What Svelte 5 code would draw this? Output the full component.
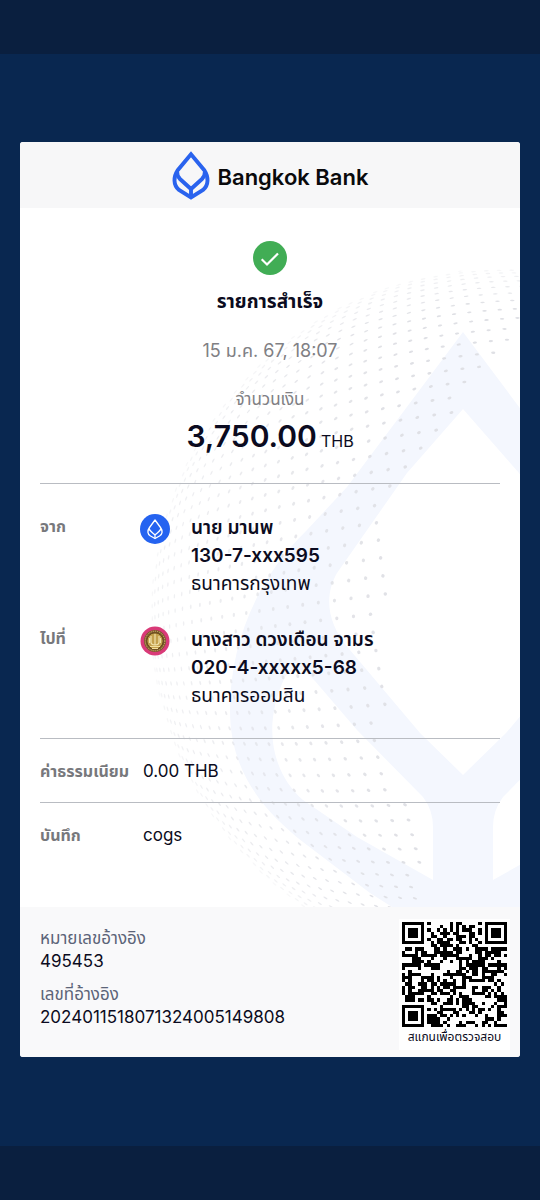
<script lang="ts">
	type Party = {
		label: string;
		name: string;
		account: string;
		bank: string;
		icon: 'bbl' | 'gsb';
	};

	const parties: Party[] = [
		{ label: 'จาก', name: 'นาย มานพ', account: '130-7-xxx595', bank: 'ธนาคารกรุงเทพ', icon: 'bbl' },
		{
			label: 'ไปที่',
			name: 'นางสาว ดวงเดือน จามร',
			account: '020-4-xxxxx5-68',
			bank: 'ธนาคารออมสิน',
			icon: 'gsb'
		}
	];

	const details = [
		{ label: 'ค่าธรรมเนียม', value: '0.00 THB' },
		{ label: 'บันทึก', value: 'cogs' }
	];

	const references = [
		{ label: 'หมายเลขอ้างอิง', value: '495453' },
		{ label: 'เลขที่อ้างอิง', value: '2024011518071324005149808' }
	];

	// the dots only cover the rim of the globe, the middle stays clear
	function isClear(x: number, y: number) {
		if (y < 285) return x * 0.787 + y * 0.618 > 467;
		return x > 366 + Math.max(0, y - 520) * 0.25;
	}

	// dotted globe behind the slip body
	function globeDots() {
		const dots = [];
		const radius = 350;
		const step = 0.053;
		for (let i = -30; i <= 10; i++) {
			for (let j = -30; j <= 30; j++) {
				const u = i * step + j * 0.008;
				const v = j * step - i * 0.006;
				const rho = Math.hypot(u, v);
				if (rho > 1.5) continue;
				const x = 480 + (radius * Math.sin(rho) * u) / (rho || 1);
				const y = 410 + (radius * Math.sin(rho) * v) / (rho || 1);
				if (isClear(x, y)) continue;
				dots.push({
					x,
					y,
					rx: Math.max(0.7, 1.8 * Math.cos(rho)),
					ry: 1.6 + rho * 0.6,
					angle: (Math.atan2(v, u) * 180) / Math.PI,
					opacity: Math.min(1, (1.6 - rho) * 2, 0.15 + x / 450)
				});
			}
		}
		return dots;
	}

	const dots = globeDots();

	const qrSize = 33;

	function inFinder(x: number, y: number) {
		return (x < 8 && y < 8) || (x > 24 && y < 8) || (x < 8 && y > 24);
	}

	function qrPath() {
		let d = '';
		let seed = 495453;
		for (let y = 0; y < qrSize; y++) {
			for (let x = 0; x < qrSize; x++) {
				seed = (seed * 1103515245 + 12345) % 2147483648;
				if (!inFinder(x, y) && seed / 2147483648 > 0.48) d += `M${x} ${y}h1v1h-1z`;
			}
		}
		return d;
	}

	const finders = [
		[0, 0],
		[26, 0],
		[0, 26]
	];

	const lotus =
		'M0 0L-116 155L-156 198C-205 245-233 310-233 378C-233 440-200 478-160 510L-93 561L0 620L93 561L160 510C200 478 233 440 233 378C233 310 205 245 156 198L116 155ZM0 77L56 141L126 241C138 262 138 290 113 318L43 401L0 443L-43 401L-113 318C-138 290-138 262-126 241L-56 141ZM-178 345Q-166 328-148 349L-106 398L-40 465Q-30 478-30 495V548L-106 505L-160 468C-190 442-202 395-178 345ZM178 345C202 395 190 442 160 468L106 505L30 548V495Q30 478 40 465L106 398L148 349Q166 328 178 345Z';
</script>

<div class="screen">
	<main>
		<article class="slip">
			<header>
				<svg class="logo" viewBox="0 0 38 49" aria-hidden="true">
					<g fill="none" stroke="#2a63ee" stroke-width="3.900">
						<path d="M19 3.200L5.500 19.500C1.500 25.500 1 34 7 39L19 46.500L31 39C37 34 36.500 25.500 32.500 19.500Z" />
						<path d="M5 20C5 24 6 26 8 28L19 38L30 28C32 26 33 24 33 20M19 37V46" />
					</g>
				</svg>
				<span class="brand">Bangkok Bank</span>
			</header>

			<div class="body">
				<svg class="watermark" viewBox="0 0 500 700" preserveAspectRatio="xMaxYMin slice" aria-hidden="true">
					<path d={lotus} transform="translate(443 124)" fill="#f4f7fe" fill-rule="evenodd" />
					{#each dots as dot}
						<ellipse
							rx={dot.rx}
							ry={dot.ry}
							fill="#dfe0e5"
							opacity={dot.opacity}
							transform={`translate(${dot.x} ${dot.y}) rotate(${dot.angle})`}
						/>
					{/each}
				</svg>

				<section class="summary">
					<svg class="check" viewBox="0 0 34 34" aria-hidden="true">
						<circle cx="17" cy="17" r="17" fill="#41ad55" />
						<path d="M8.700 18.300L14 23.500L25 12.500" fill="none" stroke="#fff" stroke-width="2.200" />
					</svg>
					<h1>รายการสำเร็จ</h1>
					<time datetime="2024-01-15T18:07">15 ม.ค. 67, 18:07</time>
					<p class="amount-label">จำนวนเงิน</p>
					<p class="amount"><strong>3,750.00</strong> <span>THB</span></p>
				</section>

				<section class="parties">
					{#each parties as party}
						<div class="party">
							<span class="label">{party.label}</span>
							{#if party.icon === 'bbl'}
								<svg class="bank-icon" viewBox="0 0 30 30" aria-hidden="true">
									<circle cx="15" cy="15" r="15" fill="#2563f0" />
									<g fill="none" stroke="#fff" stroke-width="1.300" stroke-linejoin="round">
										<path d="M15 6L9.500 13.500C7 17 7.500 20 10.500 22L15 24.500L19.500 22C22.500 20 23 17 20.500 13.500Z" />
										<path d="M9 14.500C9.500 17 13 19 15 21C17 19 20.500 17 21 14.500M15 21V24.500" />
									</g>
								</svg>
							{:else}
								<svg class="bank-icon" viewBox="0 0 30 30" aria-hidden="true">
									<circle cx="15" cy="15" r="14.500" fill="#d93a78" />
									<circle cx="15" cy="15" r="11" fill="#7b5a2a" />
									<circle cx="15" cy="15" r="9.800" fill="none" stroke="#d8bd79" stroke-dasharray="1 1" />
									<circle cx="15" cy="15" r="8.200" fill="#c3a04c" stroke="#604319" />
									<path d="M11 10v6q0 3 4 3t4-3v-6M15 8v11M9.500 12v5M20.500 12v5" fill="none" stroke="#f0e2ac" stroke-width="1.200" />
									<path d="M10 20.500h10M12 22.500h6" stroke="#f2df9d" stroke-width="1" />
								</svg>
							{/if}
							<div class="who">
								<strong>{party.name}</strong>
								<strong>{party.account}</strong>
								<span>{party.bank}</span>
							</div>
						</div>
					{/each}
				</section>

				<dl class="details">
					{#each details as row}
						<div>
							<dt class="label">{row.label}</dt>
							<dd>{row.value}</dd>
						</div>
					{/each}
				</dl>
			</div>

			<footer>
				<dl class="references">
					{#each references as ref}
						<div>
							<dt>{ref.label}</dt>
							<dd>{ref.value}</dd>
						</div>
					{/each}
				</dl>
				<figure>
					<svg class="qr" viewBox="0 0 33 33" shape-rendering="crispEdges" aria-hidden="true">
						<path d={qrPath()} />
						{#each finders as [x, y]}
							<path
								d={`M${x} ${y}h7v7h-7zM${x + 1} ${y + 1}v5h5v-5zM${x + 2} ${y + 2}h3v3h-3z`}
								fill-rule="evenodd"
							/>
						{/each}
					</svg>
					<figcaption>สแกนเพื่อตรวจสอบ</figcaption>
				</figure>
			</footer>
		</article>
	</main>
</div>

<style>
	:global(body) {
		margin: 0;
		background: #092750;
	}

	.screen {
		display: flex;
		flex-direction: column;
		box-sizing: border-box;
		min-height: 100vh;
		border-block: 54px solid #0a1f3f;
		background: #092750;
		color: #0b0b20;
		font-family: Inter, 'Noto Sans Thai', 'Noto Sans', sans-serif;
		font-size: 17px;
		line-height: 28px;
	}

	main {
		padding: 88px 20px;
	}

	h1,
	p,
	dl,
	dd,
	figure {
		margin: 0;
	}

	.slip {
		overflow: hidden;
		border-radius: 3px;
		background: #fff;
	}

	header {
		display: flex;
		align-items: center;
		justify-content: center;
		gap: 8px;
		height: 66px;
		background: #f7f7f8;
	}

	.logo {
		width: 38px;
		height: 49px;
	}

	.brand {
		padding-top: 4px;
		color: #0a0a0c;
		font-size: 22px;
		font-weight: 600;
	}

	.body {
		position: relative;
		padding: 0 20px 41px;
	}

	.watermark {
		position: absolute;
		inset: 0;
		width: 100%;
		height: 100%;
	}

	.summary,
	.parties,
	.details {
		position: relative;
	}

	.summary {
		display: flex;
		flex-direction: column;
		align-items: center;
		padding: 33px 0 28px;
		border-bottom: 1px solid #b9bcc2;
	}

	.check {
		width: 34px;
		height: 34px;
	}

	h1 {
		margin-top: 13px;
		font-size: 19px;
		font-weight: 700;
	}

	time {
		margin-top: 21px;
		color: #808084;
		font-size: 18px;
	}

	.amount-label {
		margin-top: 20px;
		color: #808084;
	}

	.amount {
		display: flex;
		align-items: baseline;
		gap: 4px;
		margin-top: 9px;
	}

	.amount strong {
		font-size: 30px;
		font-weight: 600;
	}

	.amount span {
		font-size: 16px;
	}

	.parties {
		display: flex;
		flex-direction: column;
		gap: 28px;
		padding: 30px 0 28px;
		border-bottom: 1px solid #b9bcc2;
	}

	.party {
		display: grid;
		grid-template-columns: 100px 31px 1fr;
	}

	.label {
		color: #77787c;
		font-size: 16px;
		font-weight: 700;
	}

	.party .label {
		line-height: 24px;
	}

	.bank-icon {
		width: 30px;
		height: 30px;
	}

	.who {
		display: flex;
		flex-direction: column;
		padding-left: 20px;
		font-size: 19px;
	}

	.who strong {
		font-weight: 600;
	}

	.details div {
		display: grid;
		grid-template-columns: 103px 1fr;
		padding: 18px 0 17px;
	}

	.details div + div {
		border-top: 1px solid #b9bcc2;
	}

	footer {
		display: flex;
		align-items: flex-start;
		justify-content: space-between;
		padding: 12px 10px 7px 20px;
		background: #f9f9fa;
	}

	.references {
		display: grid;
		gap: 10px;
		padding-top: 8px;
		line-height: 23px;
	}

	.references dt {
		color: #5c6478;
	}

	figure {
		display: flex;
		flex-direction: column;
		align-items: center;
		padding: 3px;
		background: #fff;
	}

	.qr {
		width: 105px;
		height: 105px;
	}

	figcaption {
		font-size: 12px;
		line-height: 20px;
	}
</style>
